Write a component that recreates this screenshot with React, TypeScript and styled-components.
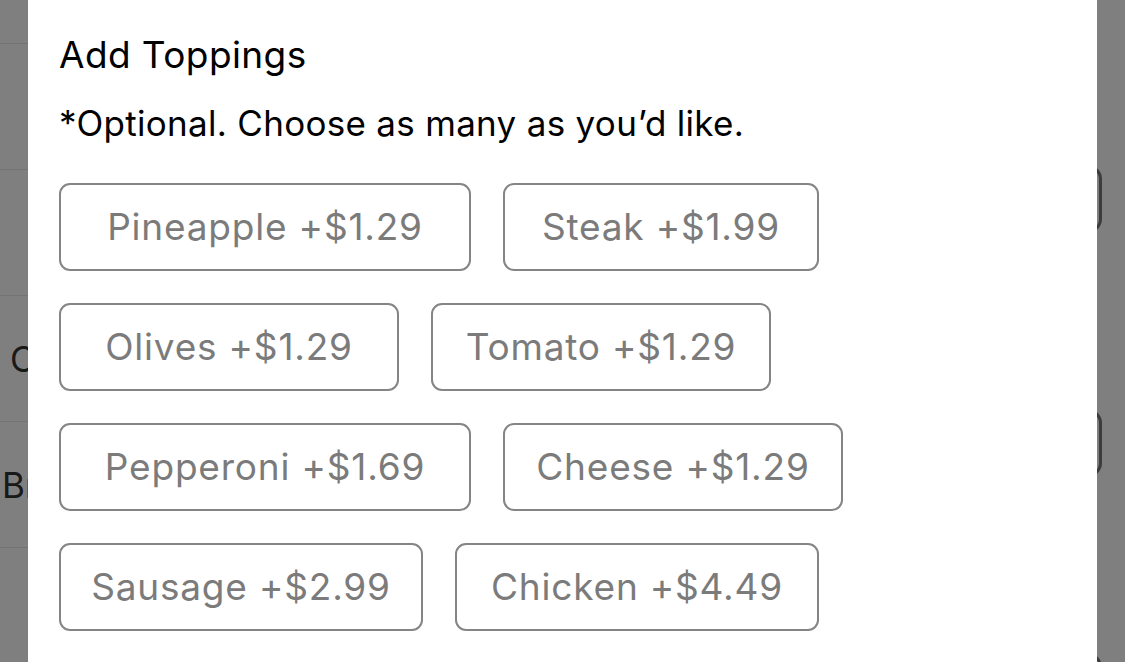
import React from "react";
import styled, { createGlobalStyle } from "styled-components";

const GlobalStyle = createGlobalStyle`
  html, body { margin: 0; padding: 0; background: #ffffff; }
  body { font-family: Inter, "Liberation Sans", Arial, sans-serif; }
  * { box-sizing: border-box; }
`;

const Page = styled.div`
  position: relative;
  width: 1125px;
  height: 662px;
  overflow: hidden;
  background: #ffffff;
`;

const BackLayer = styled.div`
  display: grid;
  grid-template-columns: 1fr 200px;
  height: 100%;
`;

const BackList = styled.div`
  display: flex;
  flex-direction: column;
`;

const BackRow = styled.div<{ $h: number }>`
  height: ${(p) => p.$h}px;
  flex: none;
  border-bottom: 1px solid #e6e6e6;
  display: flex;
  align-items: center;
`;

const BackLabel = styled.span<{ $indent: number }>`
  white-space: nowrap;
  padding-left: ${(p) => p.$indent}px;
  font-size: 35px;
  color: #333333;
  font-family: Inter, "Liberation Sans", sans-serif;
`;

const BackSide = styled.div`
  display: flex;
  flex-direction: column;
  align-items: flex-end;
  gap: 176px;
  padding: 165px 23px 0 0;
`;

const SideBox = styled.div`
  width: 160px;
  height: 68px;
  flex: none;
  border: 3px solid #787878;
  border-radius: 14px;
`;

const Overlay = styled.div`
  position: absolute;
  inset: 0;
  background: rgba(0, 0, 0, 0.5);
`;

const Modal = styled.div`
  position: absolute;
  top: 0;
  bottom: -20px;
  left: 28px;
  right: 28px;
  background: #ffffff;
  padding: 32px 31px 0;
  display: flex;
  flex-direction: column;
`;

const Title = styled.h2`
  margin: 0;
  font-family: Inter, "Liberation Sans", sans-serif;
  font-weight: 400;
  font-size: 37px;
  line-height: 46px;
  color: #000000;
  letter-spacing: 0.4px;
`;

const Subtitle = styled.p`
  margin: 23px 0 0;
  font-family: Inter, "Liberation Sans", sans-serif;
  font-weight: 400;
  font-size: 35px;
  line-height: 44px;
  color: #000000;
  letter-spacing: 0.3px;
`;

const Options = styled.div`
  margin-top: 38px;
  display: flex;
  flex-direction: column;
  gap: 32px;
`;

const OptionRow = styled.div`
  display: flex;
  gap: 32px;
`;

const OptionButton = styled.button<{ $w: number }>`
  width: ${(p) => p.$w}px;
  height: 88px;
  flex: none;
  padding: 0;
  border: 2px solid #858585;
  border-radius: 11px;
  background: #ffffff;
  color: #7b7b7b;
  font-family: Inter, "Liberation Sans", sans-serif;
  font-size: 37px;
  line-height: 84px;
  letter-spacing: 0.8px;
  text-align: center;
  white-space: nowrap;
  cursor: pointer;
`;

const rows: { label: string; price: string; w: number }[][] = [
  [
    { label: "Pineapple", price: "$1.29", w: 412 },
    { label: "Steak", price: "$1.99", w: 316 },
  ],
  [
    { label: "Olives", price: "$1.29", w: 340 },
    { label: "Tomato", price: "$1.29", w: 340 },
  ],
  [
    { label: "Pepperoni", price: "$1.69", w: 412 },
    { label: "Cheese", price: "$1.29", w: 340 },
  ],
  [
    { label: "Sausage", price: "$2.99", w: 364 },
    { label: "Chicken", price: "$4.49", w: 364 },
  ],
];

const backRows = [
  { h: 44, label: "", indent: 0 },
  { h: 126, label: "", indent: 0 },
  { h: 126, label: "", indent: 0 },
  { h: 126, label: "C", indent: 10 },
  { h: 126, label: "Br", indent: 2 },
  { h: 126, label: "", indent: 0 },
];

export default function App() {
  return (
    <Page>
      <GlobalStyle />
      <BackLayer>
        <BackList>
          {backRows.map((r, i) => (
            <BackRow key={i} $h={r.h}>
              {r.label && <BackLabel $indent={r.indent}>{r.label}</BackLabel>}
            </BackRow>
          ))}
        </BackList>
        <BackSide>
          <SideBox />
          <SideBox />
          <SideBox />
        </BackSide>
      </BackLayer>
      <Overlay />
      <Modal>
        <Title>Add Toppings</Title>
        <Subtitle>*Optional. Choose as many as you’d like.</Subtitle>
        <Options>
          {rows.map((row, i) => (
            <OptionRow key={i}>
              {row.map((o) => (
                <OptionButton key={o.label} $w={o.w}>
                  {o.label} +{o.price}
                </OptionButton>
              ))}
            </OptionRow>
          ))}
        </Options>
      </Modal>
    </Page>
  );
}
